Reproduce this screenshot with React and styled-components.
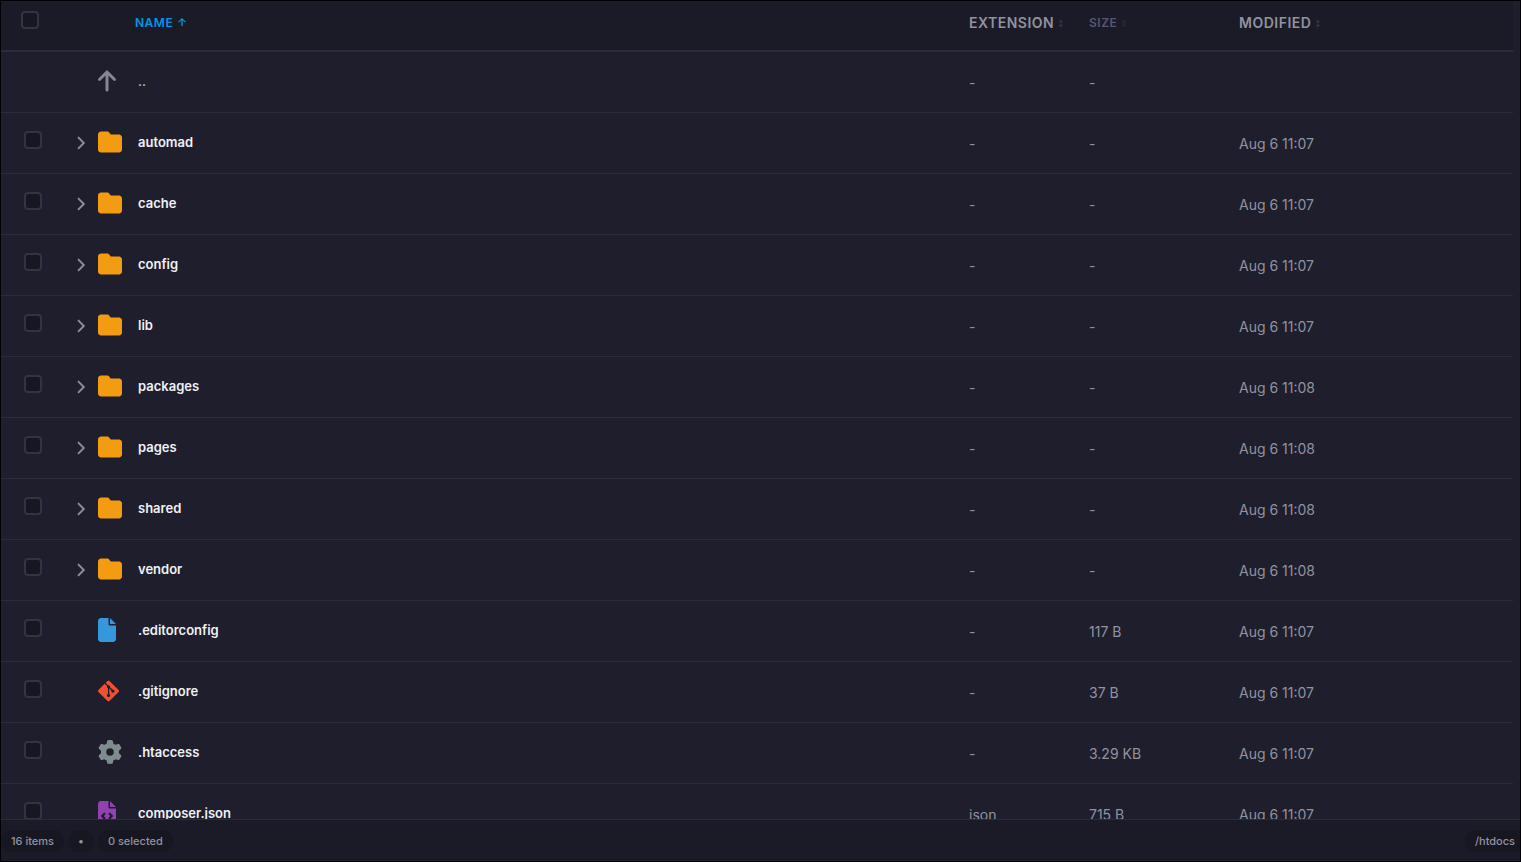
import styled, { createGlobalStyle } from "styled-components";
import {
  FaArrowUp,
  FaChevronRight,
  FaFile,
  FaFileCode,
  FaFolder,
  FaGear,
  FaGitAlt,
} from "react-icons/fa6";

const colors = {
  edge: "#000005",
  background: "#1e1e2d",
  bar: "#1b1b28",
  well: "#171722",
  border: "#2b2b3c",
  control: "#333345",
  primary: "#0095e8",
  text: "#f1f1f4",
  muted: "#92929f",
  dim: "#565674",
};

const GlobalStyle = createGlobalStyle`
  * {
    box-sizing: border-box;
  }
  body {
    margin: 0;
    background-color: ${colors.background};
    font-family: Inter, "Liberation Sans", sans-serif;
    font-size: 14px;
    color: ${colors.muted};
  }
`;

const StyledPage = styled.div`
  display: flex;
  flex-direction: column;
  height: 100vh;
  border: 1px solid ${colors.edge};
  overflow: hidden;
`;

const StyledScroller = styled.div`
  flex: 1;
  min-height: 0;
  overflow: hidden;
  padding-right: 7px;
`;

const StyledTable = styled.table`
  width: 100%;
  table-layout: fixed;
  border-collapse: separate;
  border-spacing: 0;
`;

const StyledHeadCell = styled.th`
  height: 51px;
  width: ${({ width }) => width || "auto"};
  padding: 10px 0 0 ${({ $indent }) => $indent || "0"};
  background-color: ${colors.bar};
  border-bottom: 2px solid ${colors.border};
  text-align: left;
  vertical-align: top;
`;

const StyledSort = styled.button`
  display: flex;
  align-items: center;
  gap: 4px;
  height: 22px;
  padding: 0;
  border: 0;
  background: none;
  font-family: inherit;
  font-size: ${({ $size }) => $size || "14px"};
  font-weight: 600;
  letter-spacing: 0.5px;
  text-transform: uppercase;
  color: ${({ $color }) => $color || colors.muted};
  cursor: pointer;
`;

const StyledSortMark = styled.span`
  font-size: ${({ $active }) => ($active ? "11px" : "6px")};
  opacity: ${({ $active }) => ($active ? 1 : 0.3)};
`;

const StyledCell = styled.td`
  height: 61px;
  padding: 0 0 0 ${({ $indent }) => $indent || "0"};
  border-bottom: 1px solid ${colors.border};
  vertical-align: middle;
`;

const StyledCheckbox = styled.input`
  appearance: none;
  display: block;
  width: 18px;
  height: 18px;
  margin: 0 0 ${({ $raised }) => ($raised ? "6px" : "0")};
  border: 2px solid ${colors.control};
  border-radius: 4px;
  background-color: ${colors.well};
  cursor: pointer;
`;

const StyledName = styled.div`
  display: flex;
  align-items: center;
  height: 24px;
  margin-bottom: 2px;
`;

const StyledToggle = styled.button`
  display: flex;
  width: 22px;
  padding: 2px 0 0;
  border: 0;
  background: none;
  color: ${colors.muted};
  cursor: pointer;
  svg {
    width: 14px;
    height: 14px;
    stroke: currentColor;
    stroke-width: 12px;
  }
`;

const StyledToggleSpace = styled.span`
  width: 22px;
`;

const StyledIcon = styled.span`
  display: flex;
  width: 40px;
  color: ${({ $color }) => $color};
  svg {
    width: 24px;
    height: 24px;
  }
`;

const StyledLink = styled.a`
  font-size: 13px;
  font-weight: ${({ $parent }) => ($parent ? 500 : 600)};
  color: ${({ $parent }) => ($parent ? "#cdcdde" : colors.text)};
  text-decoration: none;
`;

const StyledFooter = styled.footer`
  display: flex;
  align-items: center;
  gap: 4px;
  height: 42px;
  border-top: 1px solid ${colors.border};
  background-color: ${colors.bar};
`;

const StyledPill = styled.span`
  padding: 0 10px;
  border-radius: 11px;
  background-color: ${colors.well};
  font-size: 11px;
  font-weight: 500;
  line-height: 22px;
`;

const StyledPath = styled(StyledPill)`
  margin-left: auto;
  padding-right: 5px;
  border-radius: 11px 0 0 11px;
`;

const icons = {
  up: { icon: FaArrowUp, color: "#878792" },
  folder: { icon: FaFolder, color: "#f39c12" },
  file: { icon: FaFile, color: "#3498db" },
  git: { icon: FaGitAlt, color: "#f05032" },
  config: { icon: FaGear, color: "#7f8c8d" },
  code: { icon: FaFileCode, color: "#8e44ad" },
};

const items = [
  { name: "..", type: "up", modified: "" },
  { name: "automad", type: "folder", modified: "Aug 6 11:07" },
  { name: "cache", type: "folder", modified: "Aug 6 11:07" },
  { name: "config", type: "folder", modified: "Aug 6 11:07" },
  { name: "lib", type: "folder", modified: "Aug 6 11:07" },
  { name: "packages", type: "folder", modified: "Aug 6 11:08" },
  { name: "pages", type: "folder", modified: "Aug 6 11:08" },
  { name: "shared", type: "folder", modified: "Aug 6 11:08" },
  { name: "vendor", type: "folder", modified: "Aug 6 11:08" },
  { name: ".editorconfig", type: "file", size: "117 B", modified: "Aug 6 11:07" },
  { name: ".gitignore", type: "git", size: "37 B", modified: "Aug 6 11:07" },
  { name: ".htaccess", type: "config", size: "3.29 KB", modified: "Aug 6 11:07" },
  {
    name: "composer.json",
    type: "code",
    extension: "json",
    size: "715 B",
    modified: "Aug 6 11:07",
  },
];

function Row({ item }) {
  const { icon: Icon, color } = icons[item.type];

  return (
    <tr>
      <StyledCell $indent="23px">
        {item.type !== "up" && (
          <StyledCheckbox $raised type="checkbox" aria-label={item.name} />
        )}
      </StyledCell>
      <StyledCell>
        <StyledName>
          {item.type === "folder" ? (
            <StyledToggle type="button" aria-label={`Expand ${item.name}`}>
              <FaChevronRight preserveAspectRatio="xMinYMid" />
            </StyledToggle>
          ) : (
            <StyledToggleSpace />
          )}
          <StyledIcon $color={color}>
            <Icon preserveAspectRatio="xMinYMid" />
          </StyledIcon>
          <StyledLink href="#" $parent={item.type === "up"}>
            {item.name}
          </StyledLink>
        </StyledName>
      </StyledCell>
      <StyledCell>{item.extension || "-"}</StyledCell>
      <StyledCell>{item.size || "-"}</StyledCell>
      <StyledCell>{item.modified}</StyledCell>
    </tr>
  );
}

function App() {
  return (
    <StyledPage>
      <GlobalStyle />
      <StyledScroller>
        <StyledTable>
          <thead>
            <tr>
              <StyledHeadCell width="75px" $indent="20px">
                <StyledCheckbox type="checkbox" aria-label="Select all" />
              </StyledHeadCell>
              <StyledHeadCell $indent="59px">
                <StyledSort type="button" $size="12px" $color={colors.primary}>
                  Name <StyledSortMark $active>↑</StyledSortMark>
                </StyledSort>
              </StyledHeadCell>
              <StyledHeadCell width="120px">
                <StyledSort type="button">
                  Extension <StyledSortMark>↕</StyledSortMark>
                </StyledSort>
              </StyledHeadCell>
              <StyledHeadCell width="150px">
                <StyledSort type="button" $size="12px" $color={colors.dim}>
                  Size <StyledSortMark>↕</StyledSortMark>
                </StyledSort>
              </StyledHeadCell>
              <StyledHeadCell width="274px">
                <StyledSort type="button">
                  Modified <StyledSortMark>↕</StyledSortMark>
                </StyledSort>
              </StyledHeadCell>
            </tr>
          </thead>
          <tbody>
            {items.map((item) => (
              <Row item={item} key={item.name} />
            ))}
          </tbody>
        </StyledTable>
      </StyledScroller>
      <StyledFooter>
        <StyledPill>16 items</StyledPill>
        <StyledPill>•</StyledPill>
        <StyledPill>0 selected</StyledPill>
        <StyledPath>/htdocs</StyledPath>
      </StyledFooter>
    </StyledPage>
  );
}

export default App;
